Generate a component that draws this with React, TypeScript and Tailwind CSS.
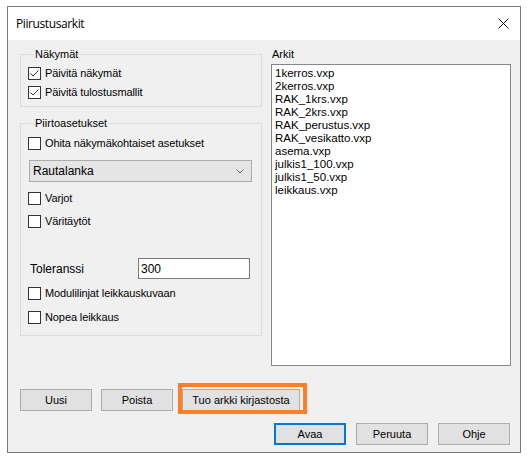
import React from "react";

const files = [
  "1kerros.vxp",
  "2kerros.vxp",
  "RAK_1krs.vxp",
  "RAK_2krs.vxp",
  "RAK_perustus.vxp",
  "RAK_vesikatto.vxp",
  "asema.vxp",
  "julkis1_100.vxp",
  "julkis1_50.vxp",
  "leikkaus.vxp",
];

const Check = ({ label, checked = false }: { label: string; checked?: boolean }) => (
  <div className="flex items-center h-[13px] gap-[4px]">
    <span className="w-[13px] h-[13px] border border-[#333] bg-white flex items-center justify-center shrink-0">
      {checked && (
        <svg width="11" height="11" viewBox="0 0 11 11">
          <path d="M1.5 5.5 L4 8 L9.5 2.5" fill="none" stroke="#333" strokeWidth="1" />
        </svg>
      )}
    </span>
    <span className="leading-[13px] tracking-[-0.1px]">{label}</span>
  </div>
);

const Btn = ({ children, primary = false }: { children: React.ReactNode; primary?: boolean }) => (
  <button
    className={
      primary
        ? "w-[72px] h-[22px] bg-[#e1e1e1] border-2 border-[#0078d7] text-[11px] leading-none"
        : "w-[72px] h-[22px] bg-[#e1e1e1] border border-[#adadad] text-[11px] leading-none"
    }
  >
    {children}
  </button>
);

export default function App() {
  return (
    <div className="min-h-screen bg-white pl-[7px] pt-[6px] text-[11px] text-black font-['Liberation_Sans',Arial,sans-serif]">
      <div className="w-[514px] h-[447px] border border-[#7a7a7a] bg-[#f0f0f0] flex flex-col">
        {/* title bar */}
        <div className="h-[33px] bg-white flex items-center justify-between pl-[8px] pr-[11px] shrink-0">
          <span className="text-[12px] font-['Open_Sans','Noto_Sans',sans-serif] tracking-[-0.4px]">Piirustusarkit</span>
          <svg width="11" height="11" viewBox="0 0 11 11">
            <path d="M0.5 0.5 L10.5 10.5 M10.5 0.5 L0.5 10.5" stroke="#111" strokeWidth="1" />
          </svg>
        </div>

        <div className="flex flex-col pl-[12px] pr-[9px]">
          <div className="flex pt-[8px] gap-[9px]">
            {/* left column */}
            <div className="w-[242px] flex flex-col">
              <fieldset className="border border-[#dcdcdc] pl-[7px] pb-[7px]">
                <legend className="ml-[6px] px-[1px] leading-[13px]">Näkymät</legend>
                <div className="flex flex-col gap-[6px] mt-[6px]">
                  <Check label="Päivitä näkymät" checked />
                  <Check label="Päivitä tulostusmallit" checked />
                </div>
              </fieldset>

              <fieldset className="border border-[#dcdcdc] pl-[7px] pb-[11px] mt-[10px]">
                <legend className="ml-[6px] px-[1px] leading-[13px]">Piirtoasetukset</legend>
                <div className="flex flex-col mt-[7px]">
                  <Check label="Ohita näkymäkohtaiset asetukset" />
                  <div className="mt-[10px] ml-[1px] w-[223px] h-[22px] bg-[#e5e5e5] border border-[#acacac] flex items-center justify-between pl-[3px] pr-[7px]">
                    <span className="text-[12px]">Rautalanka</span>
                    <svg width="8" height="5" viewBox="0 0 8 5">
                      <path d="M0.5 0.5 L4 4 L7.5 0.5" fill="none" stroke="#666" strokeWidth="1" />
                    </svg>
                  </div>
                  <div className="mt-[10px]">
                    <Check label="Varjot" />
                  </div>
                  <div className="mt-[10px]">
                    <Check label="Väritäytöt" />
                  </div>
                  <div className="mt-[30px] flex items-center h-[21px]">
                    <span className="w-[110px] pl-[2px] text-[12px]">Toleranssi</span>
                    <div className="w-[112px] h-[21px] bg-white border border-[#7a7a7a] flex items-center pl-[2px] text-[12px]">
                      300
                    </div>
                  </div>
                  <div className="mt-[8px]">
                    <Check label="Modulilinjat leikkauskuvaan" />
                  </div>
                  <div className="mt-[11px]">
                    <Check label="Nopea leikkaus" />
                  </div>
                </div>
              </fieldset>
            </div>

            {/* right column */}
            <div className="flex-1 flex flex-col">
              <span className="leading-[13px] pl-[1px]">Arkit</span>
              <div className="mt-[3px] h-[302px] bg-white border border-[#828790] pl-[3px] pt-[2px]">
                {files.map((f) => (
                  <div key={f} className="leading-[13px] text-[11.5px]">
                    {f}
                  </div>
                ))}
              </div>
            </div>
          </div>

          {/* lower buttons */}
          <div className="flex items-center mt-[23px] h-[22px]">
            <Btn>Uusi</Btn>
            <div className="ml-[9px]">
              <Btn>Poista</Btn>
            </div>
            <div className="relative ml-[9px]">
              <button className="w-[118px] h-[22px] bg-[#e1e1e1] border border-[#adadad] text-[11px] leading-none">
                Tuo arkki kirjastosta
              </button>
              <span className="absolute left-[-4px] top-[-6px] w-[129px] h-[31px] border-[4px] border-[#ff7f27] pointer-events-none" />
            </div>
          </div>

          <div className="flex justify-end gap-[10px] mt-[12px] pr-[1px]">
            <Btn primary>Avaa</Btn>
            <Btn>Peruuta</Btn>
            <Btn>Ohje</Btn>
          </div>
        </div>
      </div>
    </div>
  );
}
